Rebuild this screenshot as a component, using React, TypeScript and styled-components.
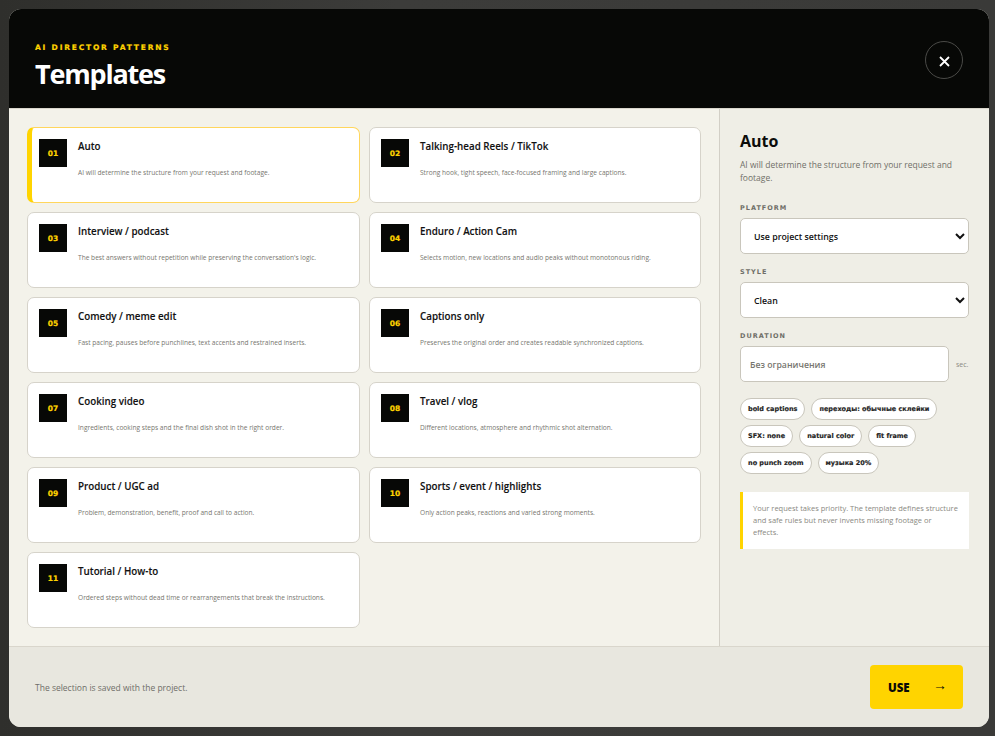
import React from "react";
import styled, { createGlobalStyle } from "styled-components";

const GlobalStyle = createGlobalStyle`
  html, body {
    margin: 0;
    padding: 0;
    height: 736px;
    overflow: hidden;
    background: #383836;
    font-family: "Open Sans", "Noto Sans", sans-serif;
  }
  * { box-sizing: border-box; }
`;

const BLACK_FONT = `"DejaVu Sans", "Liberation Sans", sans-serif`;

const Overlay = styled.div`
  height: 736px;
  padding: 9px 6px 9px 9px;
  background: linear-gradient(90deg, #2f2f2c 0, #3c3c3a 40%, #3a3a38 100%);
`;

const Modal = styled.div`
  width: 980px;
  height: 718px;
  border-radius: 12px;
  overflow: hidden;
  display: flex;
  flex-direction: column;
  background: #f2f1e9;
`;

const Header = styled.header`
  height: 100px;
  flex: none;
  background: #070806;
  border-bottom: 1px solid #d9d6cc;
  padding: 34px 26px 0;
  display: flex;
  justify-content: space-between;
`;

const Eyebrow = styled.div`
  font-family: ${BLACK_FONT};
  font-size: 7.5px;
  font-weight: 700;
  letter-spacing: 1.8px;
  line-height: 10px;
  color: #ffd400;
  -webkit-text-stroke: 0.2px #ffd400;
`;

const Title = styled.h1`
  margin: 2px 0 0;
  font-size: 27px;
  line-height: 38px;
  font-weight: 700;
  letter-spacing: -1.2px;
  color: #fff;
`;

const CloseButton = styled.button`
  width: 38px;
  height: 38px;
  margin-top: -2px;
  border: 1px solid #4a4a47;
  border-radius: 50%;
  background: transparent;
  padding: 0;
  display: flex;
  align-items: center;
  justify-content: center;
  svg { display: block; margin-top: 3px; }
`;

const Body = styled.div`
  flex: 1;
  min-height: 0;
  display: flex;
`;

const Grid = styled.div`
  width: 710px;
  flex: none;
  padding: 18px 18px 0;
  display: grid;
  grid-template-columns: 333px 332px;
  grid-auto-rows: 76px;
  column-gap: 9px;
  row-gap: 9px;
  align-content: start;
  background: #f3f2ea;
`;

const Card = styled.div<{ $active?: boolean }>`
  background: #fff;
  border: 1px solid ${(p) => (p.$active ? "#ffd65c" : "#d6d3ca")};
  border-left: ${(p) => (p.$active ? "5px solid #ffd400" : "1px solid #d6d3ca")};
  border-radius: 7px;
  padding: 11px 11px 0 ${(p) => (p.$active ? "7px" : "11px")};
  display: flex;
  gap: 11px;
`;

const Badge = styled.div`
  width: 28px;
  height: 28px;
  flex: none;
  background: #070806;
  color: #ffd400;
  font-family: ${BLACK_FONT};
  font-size: 7.5px;
  font-weight: 700;
  -webkit-text-stroke: 0.2px #ffd400;
  display: flex;
  align-items: center;
  justify-content: center;
`;

const CardText = styled.div`
  min-width: 0;
`;

const CardTitle = styled.div`
  font-size: 9.8px;
  font-weight: 600;
  line-height: 14px;
  color: #111;
  margin-top: 1px;
  -webkit-text-stroke: 0.1px #111;
`;

const CardDesc = styled.div`
  font-size: 6.6px;
  line-height: 11px;
  color: #77766f;
  margin-top: 13px;
`;

const Side = styled.aside`
  flex: 1;
  border-left: 1px solid #d2cfc6;
  padding: 21px 20px 0;
  background: #efeee6;
`;

const SideTitle = styled.h2`
  margin: 0;
  font-size: 16px;
  line-height: 22px;
  font-weight: 700;
  color: #0c0c0a;
`;

const SideDesc = styled.p`
  margin: 6px 0 0;
  padding-bottom: 6px;
  font-size: 8.5px;
  line-height: 13px;
  color: #6f6e68;
`;

const FieldLabel = styled.div`
  font-family: ${BLACK_FONT};
  font-size: 6.5px;
  font-weight: 700;
  letter-spacing: 1px;
  line-height: 9px;
  color: #6f6e68;
  margin: 14px 0 5px;
`;

const Select = styled.select`
  display: block;
  width: 229px;
  height: 36px;
  border: 1px solid #c9c6bc;
  border-radius: 5px;
  background: #fff;
  color: #111;
  font-family: inherit;
  font-size: 8.8px;
  font-weight: 600;
  padding: 1px 9px 0;
`;

const DurationRow = styled.div`
  display: flex;
  align-items: center;
  gap: 7px;
`;

const DurationInput = styled.input`
  width: 209px;
  height: 36px;
  border: 1px solid #c9c6bc;
  border-radius: 5px;
  background: #fff;
  font-family: inherit;
  font-size: 8.7px;
  font-weight: 600;
  padding: 1px 9px 0;
  &::placeholder { color: #77766f; }
`;

const Unit = styled.span`
  font-size: 7px;
  color: #8b8a83;
`;

const Tags = styled.div`
  display: flex;
  flex-wrap: wrap;
  gap: 5px 6px;
  margin-top: 16px;
`;

const Tag = styled.span`
  height: 22px;
  padding: 0 7px;
  border: 1px solid #c9c6bc;
  border-radius: 11px;
  background: #fff;
  color: #222;
  font-family: ${BLACK_FONT};
  font-size: 6.5px;
  font-weight: 700;
  -webkit-text-stroke: 0.15px #222;
  display: flex;
  align-items: center;
  white-space: nowrap;
`;

const Note = styled.div`
  margin-top: 18px;
  width: 229px;
  height: 57px;
  border-left: 3px solid #ffd400;
  background: #fff;
  padding: 10px 8px 0 10px;
  font-size: 7.5px;
  line-height: 12px;
  color: #8a8982;
`;

const Footer = styled.footer`
  height: 81px;
  flex: none;
  border-top: 1px solid #d9d6cc;
  background: #e8e7df;
  padding: 0 26px;
  display: flex;
  align-items: center;
  justify-content: space-between;
`;

const FooterNote = styled.span`
  font-size: 8.5px;
  color: #6f6e68;
`;

const UseButton = styled.button`
  width: 93px;
  height: 44px;
  border: 0;
  border-radius: 4px;
  background: #ffd400;
  color: #0a0a08;
  padding: 0 16px 0 18px;
  display: flex;
  align-items: center;
  justify-content: space-between;
  font-family: inherit;
  font-size: 11.5px;
  font-weight: 800;
`;

const Arrow = styled.span`
  font-size: 14px;
  font-weight: 400;
  line-height: 13px;
  margin-top: -5px;
`;

const templates = [
  ["Auto", "AI will determine the structure from your request and footage."],
  ["Talking-head Reels / TikTok", "Strong hook, tight speech, face-focused framing and large captions."],
  ["Interview / podcast", "The best answers without repetition while preserving the conversation's logic."],
  ["Enduro / Action Cam", "Selects motion, new locations and audio peaks without monotonous riding."],
  ["Comedy / meme edit", "Fast pacing, pauses before punchlines, text accents and restrained inserts."],
  ["Captions only", "Preserves the original order and creates readable synchronized captions."],
  ["Cooking video", "Ingredients, cooking steps and the final dish shot in the right order."],
  ["Travel / vlog", "Different locations, atmosphere and rhythmic shot alternation."],
  ["Product / UGC ad", "Problem, demonstration, benefit, proof and call to action."],
  ["Sports / event / highlights", "Only action peaks, reactions and varied strong moments."],
  ["Tutorial / How-to", "Ordered steps without dead time or rearrangements that break the instructions."],
];

const tags = [
  "bold captions",
  "переходы: обычные склейки",
  "SFX: none",
  "natural color",
  "fit frame",
  "no punch zoom",
  "музыка 20%",
];

export default function App() {
  return (
    <>
      <GlobalStyle />
      <Overlay>
        <Modal>
          <Header>
            <div>
              <Eyebrow>AI DIRECTOR PATTERNS</Eyebrow>
              <Title>Templates</Title>
            </div>
            <CloseButton aria-label="Close">
              <svg width="11" height="11" viewBox="0 0 11 11">
                <path d="M1 1 L10 10 M10 1 L1 10" stroke="#fff" strokeWidth="1.8" />
              </svg>
            </CloseButton>
          </Header>
          <Body>
            <Grid>
              {templates.map(([name, desc], i) => (
                <Card key={name} $active={i === 0}>
                  <Badge>{String(i + 1).padStart(2, "0")}</Badge>
                  <CardText>
                    <CardTitle>{name}</CardTitle>
                    <CardDesc>{desc}</CardDesc>
                  </CardText>
                </Card>
              ))}
            </Grid>
            <Side>
              <SideTitle>Auto</SideTitle>
              <SideDesc>AI will determine the structure from your request and footage.</SideDesc>
              <FieldLabel>PLATFORM</FieldLabel>
              <Select defaultValue="project">
                <option value="project">Use project settings</option>
              </Select>
              <FieldLabel>STYLE</FieldLabel>
              <Select defaultValue="clean">
                <option value="clean">Clean</option>
              </Select>
              <FieldLabel>DURATION</FieldLabel>
              <DurationRow>
                <DurationInput placeholder="Без ограничения" />
                <Unit>sec.</Unit>
              </DurationRow>
              <Tags>
                {tags.map((t) => (
                  <Tag key={t}>{t}</Tag>
                ))}
              </Tags>
              <Note>
                Your request takes priority. The template defines structure and safe rules but never invents missing footage or
                <br />
                effects.
              </Note>
            </Side>
          </Body>
          <Footer>
            <FooterNote>The selection is saved with the project.</FooterNote>
            <UseButton>
              <span>USE</span>
              <Arrow>→</Arrow>
            </UseButton>
          </Footer>
        </Modal>
      </Overlay>
    </>
  );
}
